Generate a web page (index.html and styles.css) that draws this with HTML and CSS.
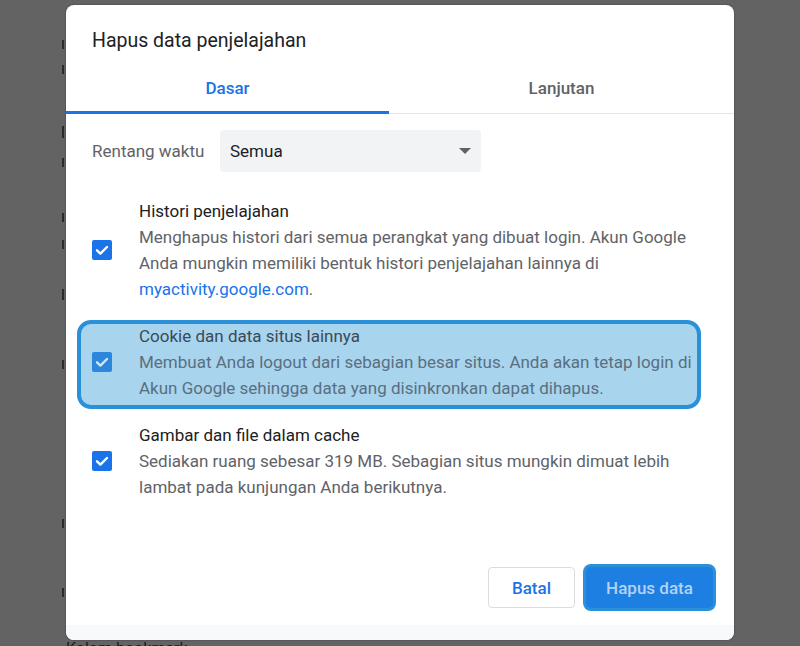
FILE: index.html
```html
<!DOCTYPE html>
<html lang="id">
<head>
<meta charset="utf-8">
<title>Hapus data penjelajahan</title>
<link rel="stylesheet" href="styles.css">
</head>
<body>
<div class="backdrop">
  <div class="edge-marks">
    <span class="mk m1"></span>
    <span class="mk m2"></span>
    <span class="mk m3"></span>
    <span class="mk m4"></span>
    <span class="mk m5"></span>
    <span class="mk m6"></span>
    <span class="mk m7"></span>
    <span class="mk m8"></span>
    <span class="mk m9"></span>
    <span class="mk m10"></span>
  </div>
  <p class="bg-line">Kolom bookmark</p>
</div>

<div class="dialog">
  <h1 class="title">Hapus data penjelajahan</h1>
  <div class="tabs">
    <div class="tab active">Dasar</div>
    <div class="tab">Lanjutan</div>
  </div>

  <div class="body">
    <div class="range">
      <span class="range-label">Rentang waktu</span>
      <div class="select">
        <span>Semua</span>
        <svg class="arrow" width="12" height="6" viewBox="0 0 12 6"><path d="M0 0 L12 0 L6 6 Z" fill="#5f6368"/></svg>
      </div>
    </div>

    <div class="item">
      <span class="check"><svg width="20" height="20" viewBox="0 0 20 20"><path d="M5 10.3 L8.4 13.6 L15 7" fill="none" stroke="#fff" stroke-width="2.4" stroke-linecap="round" stroke-linejoin="round"/></svg></span>
      <div class="text">
        <div class="item-title">Histori penjelajahan</div>
        <div class="item-desc">Menghapus histori dari semua perangkat yang dibuat login. Akun Google Anda mungkin memiliki bentuk histori penjelajahan lainnya di <span class="link">myactivity.google.com</span>.</div>
      </div>
    </div>

    <div class="item hl">
      <span class="check"><svg width="20" height="20" viewBox="0 0 20 20"><path d="M5 10.3 L8.4 13.6 L15 7" fill="none" stroke="#cfe6f7" stroke-width="2.4" stroke-linecap="round" stroke-linejoin="round"/></svg></span>
      <div class="text">
        <div class="item-title">Cookie dan data situs lainnya</div>
        <div class="item-desc">Membuat Anda logout dari sebagian besar situs. Anda akan tetap login di Akun Google sehingga data yang disinkronkan dapat dihapus.</div>
      </div>
    </div>

    <div class="item">
      <span class="check"><svg width="20" height="20" viewBox="0 0 20 20"><path d="M5 10.3 L8.4 13.6 L15 7" fill="none" stroke="#fff" stroke-width="2.4" stroke-linecap="round" stroke-linejoin="round"/></svg></span>
      <div class="text">
        <div class="item-title">Gambar dan file dalam cache</div>
        <div class="item-desc">Sediakan ruang sebesar 319 MB. Sebagian situs mungkin dimuat lebih lambat pada kunjungan Anda berikutnya.</div>
      </div>
    </div>
  </div>

  <div class="footer">
    <button class="btn cancel">Batal</button>
    <button class="btn primary">Hapus data</button>
  </div>
  <div class="strip"></div>
</div>
</body>
</html>
```

FILE: styles.css
```css
* { box-sizing: border-box; }

html, body {
  margin: 0;
  padding: 0;
  height: 100%;
}

body {
  background: #636363;
  font-family: Roboto, "Liberation Sans", sans-serif;
  overflow: hidden;
  position: relative;
}

.backdrop {
  height: 100%;
  display: flex;
  flex-direction: column;
  justify-content: space-between;
  padding: 40px 0 0 62px;
  color: #1b1b1b;
}

.edge-marks {
  display: flex;
  flex-direction: column;
}

.mk {
  display: block;
  width: 2px;
  height: 9px;
  background: #2a2a2a;
}
.m1 { margin-top: 0; }
.m2 { margin-top: 16px; }
.m3 { margin-top: 52px; height: 12px; }
.m4 { margin-top: 20px; }
.m5 { margin-top: 46px; }
.m6 { margin-top: 18px; }
.m7 { margin-top: 40px; height: 11px; }
.m8 { margin-top: 60px; }
.m9 { margin-top: 150px; }
.m10 { margin-top: 60px; }

.bg-line {
  margin: 0 0 -12px 4px;
  font-size: 16px;
  line-height: 18px;
  white-space: nowrap;
}

.dialog {
  position: absolute;
  left: 66px;
  top: 5px;
  width: 668px;
  height: 635px;
  background: #fff;
  border-radius: 8px;
  overflow: hidden;
  display: flex;
  flex-direction: column;
  box-shadow: 0 0 2px rgba(0,0,0,0.4);
}

.title {
  margin: 0;
  padding: 24px 26px 0;
  font-size: 19.5px;
  font-weight: 400;
  line-height: 24px;
  color: #202124;
}

.tabs {
  margin-top: 9px;
  height: 52px;
  display: grid;
  grid-template-columns: 323px 1fr;
  border-bottom: 1px solid #e3e4e6;
}

.tab {
  display: flex;
  align-items: center;
  justify-content: center;
  font-size: 17px;
  font-weight: 500;
  color: #5f6368;
}

.tab.active {
  color: #1a73e8;
  box-shadow: inset 0 -3px 0 #1a73e8;
  margin-bottom: -1px;
}

.body {
  padding: 16px 0 0 26px;
}

.range {
  display: flex;
  align-items: center;
}

.range-label {
  width: 128px;
  font-size: 17px;
  color: #5f6368;
}

.select {
  width: 261px;
  height: 42px;
  background: #f1f3f4;
  border-radius: 4px;
  display: flex;
  align-items: center;
  justify-content: space-between;
  padding: 0 10px 0 10px;
  font-size: 17px;
  color: #202124;
}

.item {
  display: flex;
  align-items: center;
  margin-top: 21px;
  position: relative;
  font-size: 17px;
  line-height: 26px;
}

.range + .item { margin-top: 26px; }

.check {
  width: 20px;
  height: 20px;
  border-radius: 2px;
  background: #1a73e8;
  flex: none;
  margin-right: 27px;
  position: relative;
  z-index: 1;
}
.check svg { display: block; }

.text {
  width: 566px;
  position: relative;
  z-index: 1;
}

.item-title { color: #202124; }
.item-desc { color: #5f6368; }
.link { color: #1a73e8; }

.hl::before {
  content: "";
  position: absolute;
  left: -15px;
  right: 33px;
  top: -3px;
  bottom: -8px;
  border: 4px solid #2a91d9;
  border-radius: 14px;
  background: #a8d4ee;
  z-index: 0;
}
.hl .check { background: #2a87db; }
.hl .item-title { color: #3b4a56; }
.hl .item-desc { color: #5a6f80; }

.footer {
  margin-top: auto;
  display: flex;
  justify-content: flex-end;
  align-items: center;
  gap: 11px;
  padding: 0 21px 17px 0;
}

.btn {
  height: 41px;
  border-radius: 4px;
  font-family: inherit;
  font-size: 17px;
  font-weight: 500;
  padding: 0;
  cursor: pointer;
}

.cancel {
  width: 87px;
  background: #fff;
  border: 1px solid #dadce0;
  color: #1a73e8;
}

.primary {
  width: 127px;
  background: #1e7fe2;
  border: none;
  color: #b4d2f3;
  box-shadow: 0 0 0 3px #2a91d9;
  border-radius: 5px;
}

.strip {
  height: 15px;
  background: #f8f9fa;
  flex: none;
}
```
